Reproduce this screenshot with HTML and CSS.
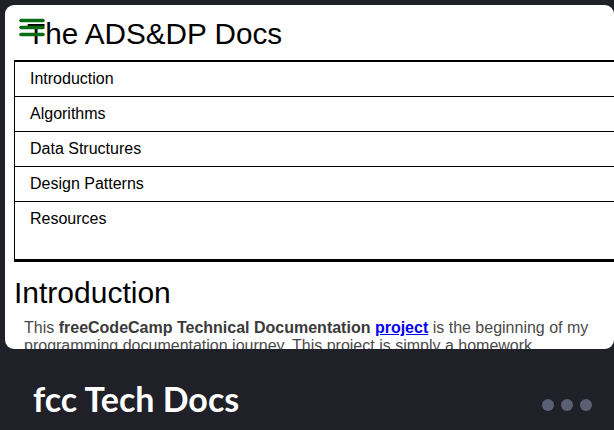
FILE: index.html
```html
<!DOCTYPE html>
<html>
<head>
<meta charset="utf-8">
<link rel="stylesheet" href="styles.css">
</head>
<body>
<div class="card">
  <div class="preview">
    <header class="top">
      <svg class="burger" width="26" height="20" viewBox="0 0 26 20">
        <g stroke="#0b6b12" stroke-width="3.6" stroke-linecap="round">
          <line x1="2" y1="2.5" x2="24" y2="2.5"/>
          <line x1="2" y1="9.5" x2="24" y2="9.5"/>
          <line x1="2" y1="16.5" x2="24" y2="16.5"/>
        </g>
      </svg>
      <h1 class="title">The ADS&amp;DP Docs</h1>
    </header>
    <nav class="nav">
      <ul class="nav-list">
        <li class="nav-item">Introduction</li>
        <li class="nav-item">Algorithms</li>
        <li class="nav-item">Data Structures</li>
        <li class="nav-item">Design Patterns</li>
        <li class="nav-item nav-last">Resources</li>
      </ul>
    </nav>
    <section class="section">
      <h2 class="section-title">Introduction</h2>
      <p class="text">This <b>freeCodeCamp Technical Documentation</b> <a class="link" href="#">project</a> is the beginning of my programming documentation journey. This project is simply a homework assignment.</p>
    </section>
  </div>
</div>
<footer class="footer">
  <span class="footer-title">fcc Tech Docs</span>
  <span class="dots"><i class="dot"></i><i class="dot"></i><i class="dot"></i></span>
</footer>
</body>
</html>
```

FILE: styles.css
```css
html, body {
  margin: 0;
  padding: 0;
}
body {
  background: #1f2028;
  width: 614px;
  height: 430px;
  overflow: hidden;
}
.card {
  margin: 5px 0 0 5px;
  width: 609px;
  height: 344px;
  background: #fff;
  border-radius: 9px;
  overflow: hidden;
}
.preview {
  font-family: "Liberation Sans", Arial, sans-serif;
  color: #000;
}
.top {
  position: relative;
  height: 55px;
}
.burger {
  position: absolute;
  left: 14px;
  top: 13px;
}
.title {
  margin: 0;
  padding: 12px 0 0 22px;
  font-size: 29.7px;
  font-weight: normal;
  line-height: 34px;
}
.nav {
  margin-left: 9px;
  width: 640px;
}
.nav-list {
  list-style: none;
  margin: 0;
  padding: 0;
  border-top: 2px solid #000;
  border-left: 1px solid #000;
  border-bottom: 3px solid #000;
}
.nav-item {
  font-size: 16px;
  line-height: 34px;
  height: 34px;
  padding-left: 15px;
  border-bottom: 1px solid #000;
}
.nav-last {
  height: 57px;
  border-bottom: none;
}
.section {
  padding: 0 9px;
}
.section-title {
  margin: 14px 0 0;
  font-size: 30px;
  font-weight: normal;
  line-height: 34px;
}
.text {
  margin: 9px 0 0;
  padding-left: 10px;
  font-size: 16px;
  line-height: 18px;
  color: #4a4a4a;
}
.text b {
  color: #3a3a3a;
}
.link {
  color: #0000ee;
  font-weight: bold;
}
.footer {
  display: flex;
  align-items: flex-start;
  justify-content: space-between;
  height: 81px;
  padding: 0 22px 0 33px;
}
.footer-title {
  margin-top: 29px;
  font-family: Lato, "Noto Sans", sans-serif;
  font-weight: bold;
  font-size: 34px;
  line-height: 41px;
  color: #fff;
}
.dots {
  display: flex;
  gap: 7px;
  margin-top: 50px;
}
.dot {
  display: block;
  width: 12px;
  height: 12px;
  border-radius: 50%;
  background: #5b5f74;
}
```
